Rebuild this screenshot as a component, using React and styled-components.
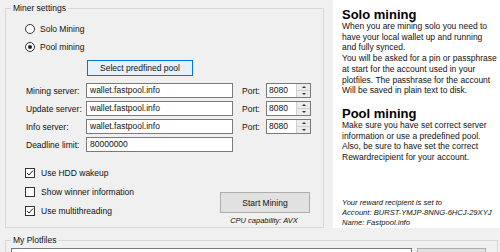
import { Fragment } from "react";
import styled, { createGlobalStyle } from "styled-components";

const GlobalStyle = createGlobalStyle`
  html, body {
    margin: 0;
    padding: 0;
    background: #f0f0f0;
    overflow: hidden;
  }
  body {
    font-family: "Liberation Sans", Arial, sans-serif;
    font-size: 8.5px;
    color: #111;
  }
`;

const Page = styled.div`
  width: 500px;
  height: 252px;
  display: flex;
  flex-direction: column;
`;

const TopRow = styled.div`
  display: flex;
  align-items: flex-start;
`;

const GroupBox = styled.fieldset`
  box-sizing: border-box;
  margin: ${(p) => p.$margin || "0"};
  padding: 0 0 0 5px;
  border: 1px solid #d8d8d8;
  width: ${(p) => p.$width}px;
  height: ${(p) => p.$height}px;
  min-inline-size: 0;
`;

const Legend = styled.legend`
  padding: 0 2px;
  line-height: 10px;
  font-size: 8.5px;
`;

const SettingsBody = styled.div`
  padding: 7px 0 0 14px;
  display: flex;
  flex-direction: column;
`;

const OptionRow = styled.label`
  display: flex;
  align-items: center;
  height: ${(p) => p.$h || 18}px;
  gap: ${(p) => p.$gap || 5}px;
  white-space: nowrap;
`;

const RadioCircle = styled.span`
  box-sizing: border-box;
  width: 10px;
  height: 10px;
  border-radius: 50%;
  border: 1px solid #333;
  background: #fff;
  display: flex;
  align-items: center;
  justify-content: center;
  &::after {
    content: "";
    width: 4px;
    height: 4px;
    border-radius: 50%;
    background: ${(p) => (p.$on ? "#222" : "transparent")};
  }
`;

const CheckSquare = styled.span`
  box-sizing: border-box;
  width: 10px;
  height: 10px;
  border: 1px solid #333;
  background: #fff;
  display: flex;
  align-items: center;
  justify-content: center;
`;

const PoolButton = styled.button`
  box-sizing: border-box;
  margin: 4px 0 0 62px;
  width: 106px;
  height: 16px;
  padding: 0;
  font-family: inherit;
  font-size: 8.5px;
  color: #111;
  background: #e5f1fb;
  border: 1px solid #0078d7;
`;

const FormGrid = styled.div`
  margin-top: 7px;
  display: grid;
  grid-template-columns: 61px 147px 8px 25px 45px;
  grid-auto-rows: 15px;
  row-gap: 3px;
  align-items: center;
`;

const FieldLabel = styled.span`
  grid-column: ${(p) => p.$col || 1};
  padding-left: 1px;
  white-space: nowrap;
`;

const TextBox = styled.div`
  grid-column: 2;
  box-sizing: border-box;
  height: 15px;
  border: 1px solid #7a7a7a;
  background: #fff;
  padding: 0 3px;
  line-height: 13px;
  white-space: nowrap;
  overflow: hidden;
`;

const Spinner = styled.div`
  grid-column: 5;
  box-sizing: border-box;
  height: 15px;
  border: 1px solid #7a7a7a;
  background: #fff;
  display: flex;
`;

const SpinValue = styled.span`
  flex: 1;
  padding-left: 2px;
  line-height: 13px;
`;

const SpinArrows = styled.span`
  width: 13px;
  display: flex;
  flex-direction: column;
  border-left: 1px solid #d0d0d0;
  background: #ececec;
`;

const SpinHalf = styled.span`
  flex: 1;
  display: flex;
  align-items: center;
  justify-content: center;
  border-top: ${(p) => (p.$lower ? "1px solid #d0d0d0" : "none")};
  &::after {
    content: "";
    border-left: 2px solid transparent;
    border-right: 2px solid transparent;
    ${(p) =>
      p.$lower ? "border-top: 2px solid #333;" : "border-bottom: 2px solid #333;"}
  }
`;

const BottomArea = styled.div`
  margin-top: 11px;
  display: flex;
`;

const CheckColumn = styled.div`
  width: 195px;
  display: flex;
  flex-direction: column;
`;

const StartColumn = styled.div`
  margin-top: 29px;
  width: 90px;
  display: flex;
  flex-direction: column;
  align-items: center;
`;

const GrayButton = styled.button`
  box-sizing: border-box;
  width: ${(p) => p.$w}px;
  height: ${(p) => p.$h}px;
  margin: 0;
  padding: 0;
  font-family: inherit;
  font-size: 8.5px;
  color: #111;
  background: #e1e1e1;
  border: 1px solid #adadad;
`;

const Caption = styled.span`
  margin-top: 3px;
  line-height: 10px;
  font-size: 7.5px;
  font-style: italic;
  white-space: nowrap;
  padding-right: 2px;
`;

const InfoPanel = styled.div`
  box-sizing: border-box;
  margin-left: 9px;
  width: 167px;
  height: 228px;
  background: #fff;
  padding: 8px 0 0 9px;
  display: flex;
  flex-direction: column;
  white-space: nowrap;
`;

const InfoHeading = styled.div`
  font-size: 13px;
  font-weight: bold;
  line-height: 13px;
  margin-top: ${(p) => p.$top || 0}px;
  color: #000;
`;

const InfoText = styled.div`
  line-height: 10.7px;
  font-size: 8.5px;
`;

const RewardText = styled.div`
  margin-top: auto;
  line-height: 10px;
  font-size: 7.6px;
  font-style: italic;
`;

const PlotRow = styled.div`
  margin-top: 3px;
  display: flex;
  gap: 5px;
`;

const PlotList = styled.div`
  box-sizing: border-box;
  width: 401px;
  height: 22px;
  border: 1px solid #7a7a7a;
  background: #fff;
  padding: 2px 2px;
  line-height: 11px;
  white-space: nowrap;
  overflow: hidden;
`;

const Check = () => (
  <svg width="8" height="8" viewBox="0 0 8 8">
    <polyline points="1,4 3,6 7,1.5" fill="none" stroke="#222" strokeWidth="1" />
  </svg>
);

const servers = [
  { label: "Mining server:", value: "wallet.fastpool.info", port: "8080" },
  { label: "Update server:", value: "wallet.fastpool.info", port: "8080" },
  { label: "Info server:", value: "wallet.fastpool.info", port: "8080" },
  { label: "Deadline limit:", value: "80000000" },
];

const options = [
  { label: "Use HDD wakeup", on: true },
  { label: "Show winner information", on: false },
  { label: "Use multithreading", on: true },
];

export default function App() {
  return (
    <Page>
      <GlobalStyle />
      <TopRow>
        <GroupBox $width={319} $height={225} $margin="3px 0 0 5px">
          <Legend>Miner settings</Legend>
          <SettingsBody>
            <OptionRow>
              <RadioCircle />
              Solo Mining
            </OptionRow>
            <OptionRow>
              <RadioCircle $on />
              Pool mining
            </OptionRow>
            <PoolButton>Select predfined pool</PoolButton>
            <FormGrid>
              {servers.map((s) => (
                <Fragment key={s.label}>
                  <FieldLabel>{s.label}</FieldLabel>
                  <TextBox>{s.value}</TextBox>
                  {s.port && (
                    <>
                      <FieldLabel $col={4}>Port:</FieldLabel>
                      <Spinner>
                        <SpinValue>{s.port}</SpinValue>
                        <SpinArrows>
                          <SpinHalf />
                          <SpinHalf $lower />
                        </SpinArrows>
                      </Spinner>
                    </>
                  )}
                </Fragment>
              ))}
            </FormGrid>
            <BottomArea>
              <CheckColumn>
                {options.map((o) => (
                  <OptionRow key={o.label} $h={19} $gap={6}>
                    <CheckSquare>{o.on && <Check />}</CheckSquare>
                    {o.label}
                  </OptionRow>
                ))}
              </CheckColumn>
              <StartColumn>
                <GrayButton $w={90} $h={21}>
                  Start Mining
                </GrayButton>
                <Caption>CPU capability: AVX</Caption>
              </StartColumn>
            </BottomArea>
          </SettingsBody>
        </GroupBox>
        <InfoPanel>
          <InfoHeading>Solo mining</InfoHeading>
          <InfoText>
            When you are mining solo you need to
            <br />
            have your local wallet up and running
            <br />
            and fully synced.
            <br />
            You will be asked for a pin or passphrase
            <br />
            at start for the account used in your
            <br />
            plotfiles. The passhrase for the account
            <br />
            Will be saved in plain text to disk.
          </InfoText>
          <InfoHeading $top={11}>Pool mining</InfoHeading>
          <InfoText>
            Make sure you have set correct server
            <br />
            information or use a predefined pool.
            <br />
            Also, be sure to have set the correct
            <br />
            Rewardrecipient for your account.
          </InfoText>
          <RewardText>
            Your reward recipient is set to
            <br />
            Account: BURST-YMJP-8NNG-6HCJ-29XYJ
            <br />
            Name: Fastpool.info
          </RewardText>
        </InfoPanel>
      </TopRow>
      <GroupBox $width={493} $height={40} $margin="7px 0 0 5px">
        <Legend>My Plotfiles</Legend>
        <PlotRow>
          <PlotList>D:\5803221061201677750_8_8844800_8844800</PlotList>
          <GrayButton $w={69} $h={22} />
        </PlotRow>
      </GroupBox>
    </Page>
  );
}
